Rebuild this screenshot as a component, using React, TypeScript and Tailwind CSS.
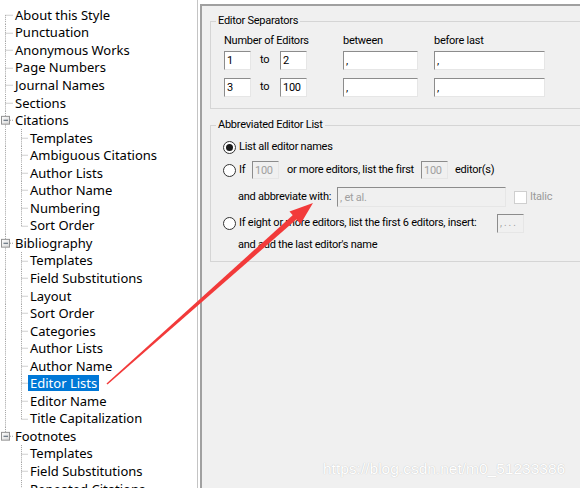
import React from 'react';

interface TreeNode {
  label: string;
  level: 0 | 1;
  expander?: boolean;
  first?: boolean;
  last?: boolean;
  parentLast?: boolean;
  selected?: boolean;
}

const tree: TreeNode[] = [
  { label: 'About this Style', level: 0, first: true },
  { label: 'Punctuation', level: 0 },
  { label: 'Anonymous Works', level: 0 },
  { label: 'Page Numbers', level: 0 },
  { label: 'Journal Names', level: 0 },
  { label: 'Sections', level: 0 },
  { label: 'Citations', level: 0, expander: true },
  { label: 'Templates', level: 1 },
  { label: 'Ambiguous Citations', level: 1 },
  { label: 'Author Lists', level: 1 },
  { label: 'Author Name', level: 1 },
  { label: 'Numbering', level: 1 },
  { label: 'Sort Order', level: 1, last: true },
  { label: 'Bibliography', level: 0, expander: true },
  { label: 'Templates', level: 1 },
  { label: 'Field Substitutions', level: 1 },
  { label: 'Layout', level: 1 },
  { label: 'Sort Order', level: 1 },
  { label: 'Categories', level: 1 },
  { label: 'Author Lists', level: 1 },
  { label: 'Author Name', level: 1 },
  { label: 'Editor Lists', level: 1, selected: true },
  { label: 'Editor Name', level: 1 },
  { label: 'Title Capitalization', level: 1, last: true },
  { label: 'Footnotes', level: 0, expander: true, last: true },
  { label: 'Templates', level: 1, parentLast: true },
  { label: 'Field Substitutions', level: 1, parentLast: true },
  { label: 'Repeated Citations', level: 1, parentLast: true },
];

const dot = { stroke: '#a0a0a0', strokeDasharray: '1 1', strokeWidth: 1, shapeRendering: 'crispEdges' as const };

const Connector: React.FC<{ node: TreeNode }> = ({ node }) => {
  const w = node.level === 0 ? 13 : 28;
  const c = 9.5;
  return (
    <svg width={w} height="100%" viewBox={`0 0 ${w} 18`} preserveAspectRatio="none" className="shrink-0">
      {node.level === 0 && !node.expander && (
        <>
          <line x1="5.5" y1={node.first ? c : 0} x2="5.5" y2={node.last ? c : 18} {...dot} />
          <line x1="5.5" y1={c} x2="13" y2={c} {...dot} />
        </>
      )}
      {node.level === 0 && node.expander && (
        <>
          <line x1="5.5" y1="0" x2="5.5" y2="5" {...dot} />
          {!node.last && <line x1="5.5" y1="14" x2="5.5" y2="18" {...dot} />}
          <line x1="10" y1={c} x2="13" y2={c} {...dot} />
          <defs>
            <linearGradient id="exp" x1="0" y1="0" x2="1" y2="1">
              <stop offset="0" stopColor="#ffffff" />
              <stop offset="1" stopColor="#d8d8d8" />
            </linearGradient>
          </defs>
          <rect x="1.5" y="5.5" width="8" height="8" fill="url(#exp)" stroke="#919191" shapeRendering="crispEdges" />
          <line x1="3.5" y1={c} x2="8" y2={c} stroke="#4a5a6a" shapeRendering="crispEdges" />
        </>
      )}
      {node.level === 1 && (
        <>
          {!node.parentLast && <line x1="5.5" y1="0" x2="5.5" y2="18" {...dot} />}
          <line x1="21.5" y1="0" x2="21.5" y2={node.last ? c : 18} {...dot} />
          <line x1="21.5" y1={c} x2="28" y2={c} {...dot} />
        </>
      )}
    </svg>
  );
};

const TreeRow: React.FC<{ node: TreeNode }> = ({ node }) => (
  <div className="h-[17.55px] flex items-center whitespace-nowrap">
    <Connector node={node} />
    <span
      className={
        node.selected
          ? 'px-[2px] h-[16px] leading-[16px] bg-[#0078d7] text-white'
          : 'px-[2px] h-[16px] leading-[16px] text-black'
      }
    >
      {node.label}
    </span>
  </div>
);

const Field: React.FC<{ value: string; className: string; disabled?: boolean }> = ({ value, className, disabled }) => (
  <div
    className={`${className} shrink-0 border border-t-[#8c8c8c] border-l-[#8c8c8c] border-r-[#e6e6e6] border-b-[#e6e6e6] pl-[2px] flex items-center leading-none ${
      disabled ? 'bg-[#f0f0f0] text-[#a0a0a0]' : 'bg-white text-black'
    }`}
  >
    {value}
  </div>
);

const Radio: React.FC<{ checked?: boolean }> = ({ checked }) => (
  <div className="w-[13px] h-[13px] shrink-0 rounded-full border border-[#333] bg-white flex items-center justify-center">
    {checked && <div className="w-[7px] h-[7px] rounded-full bg-[#1a1a1a]" />}
  </div>
);

export default function App() {
  return (
    <div className="relative w-[580px] h-[488px] overflow-hidden flex bg-white">
      {/* style tree */}
      <div className="w-[198px] shrink-0 bg-white border-r border-[#c4c4c4] pt-[6px] text-[13px] font-['Noto_Sans',sans-serif]">
        {tree.map((n, i) => (
          <TreeRow key={i} node={n} />
        ))}
      </div>

      {/* settings panel */}
      <div className="ml-[2px] mt-[4px] flex-1 bg-[#f0f0f0] border-l-2 border-t-2 border-[#a0a0a0] pl-[8px] text-[11px] tracking-[-0.25px] text-black font-['Roboto',sans-serif]">
        <fieldset className="mt-[8px] w-[390px] border border-[#d5d5d5]">
          <legend className="ml-[5px] px-[2px] leading-[14px]">Editor Separators</legend>
          <div className="pl-[13px] pb-[11px]">
            <div className="pt-[6px] h-[20px] grid grid-cols-[119px_91px_111px] items-center leading-[14px]">
              <div>Number of Editors</div>
              <div>between</div>
              <div>before last</div>
            </div>
            <div className="mt-[3px] grid grid-cols-[27px_29px_27px_36px_75px_16px_111px] gap-y-[8px] items-center">
              <Field value="1" className="w-[27px] h-[19px]" />
              <div className="pl-[9px]">to</div>
              <Field value="2" className="w-[27px] h-[19px]" />
              <div />
              <Field value="," className="w-[75px] h-[19px]" />
              <div />
              <Field value="," className="w-[111px] h-[19px]" />

              <Field value="3" className="w-[27px] h-[19px]" />
              <div className="pl-[9px]">to</div>
              <Field value="100" className="w-[27px] h-[19px]" />
              <div />
              <Field value="," className="w-[75px] h-[19px]" />
              <div />
              <Field value="," className="w-[111px] h-[19px]" />
            </div>
          </div>
        </fieldset>

        <fieldset className="mt-[9px] w-[390px] border border-[#d5d5d5]">
          <legend className="ml-[5px] px-[2px] leading-[14px]">Abbreviated Editor List</legend>
          <div className="pl-[12px] pb-[7px] flex flex-col whitespace-nowrap">
            <div className="mt-[6px] h-[18px] flex items-center">
              <Radio checked />
              <span className="ml-[3px]">List all editor names</span>
            </div>
            <div className="mt-[4px] h-[20px] flex items-center">
              <Radio />
              <span className="ml-[3px] w-[13px]">If</span>
              <Field value="100" disabled className="w-[27px] h-[18px]" />
              <span className="ml-[8px] w-[134px]">or more editors, list the first</span>
              <Field value="100" disabled className="w-[27px] h-[18px]" />
              <span className="ml-[7px]">editor(s)</span>
            </div>
            <div className="mt-[7px] h-[20px] flex items-center pl-[15px]">
              <span className="w-[99px]">and abbreviate with:</span>
              <Field value=", et al." disabled className="w-[169px] h-[20px]" />
              <div className="ml-[8px] w-[13px] h-[13px] bg-white border border-[#cfcfcf]" />
              <span className="ml-[3px] text-[#9a9a9a]">Italic</span>
            </div>
            <div className="mt-[6px] h-[20px] flex items-center">
              <Radio />
              <span className="ml-[3px] w-[258px]">If eight or more editors, list the first 6 editors, insert:</span>
              <Field value=", . . ." disabled className="w-[27px] h-[19px] text-[10px]" />
            </div>
            <div className="mt-[3px] h-[18px] flex items-center pl-[15px]">
              <span>and add the last editor's name</span>
            </div>
          </div>
        </fieldset>
      </div>

      {/* red annotation arrow */}
      <svg className="absolute inset-0 pointer-events-none" width="580" height="488" viewBox="0 0 580 488">
        <polygon points="106.5,383.5 107.5,384.5 298,218 294,214" fill="#f23a3a" />
        <polygon points="313,203 289.5,211.5 300.5,224" fill="#f23a3a" />
      </svg>

      {/* watermark */}
      <div className="absolute left-[323px] top-[459px] text-[15.5px] leading-[20px] text-white font-['Liberation_Sans',sans-serif] [text-shadow:0_0_1px_rgba(0,0,0,0.25)]">
        https://blog.csdn.net/m0_51233386
      </div>
    </div>
  );
}
